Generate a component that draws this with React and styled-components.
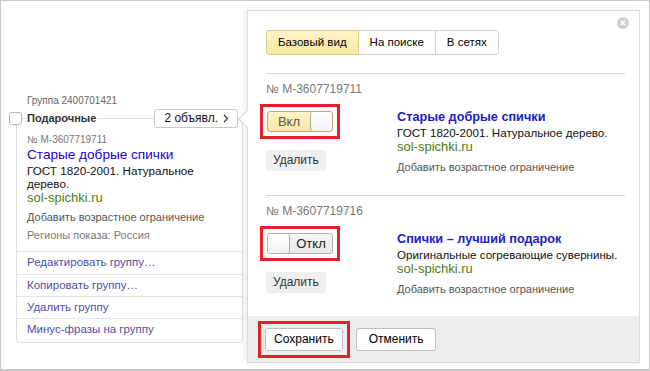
import React from "react";
import styled, { createGlobalStyle, css } from "styled-components";

const Global = createGlobalStyle`
  html, body { margin: 0; padding: 0; background: #fff; }
  body { font-family: "Liberation Sans", Arial, sans-serif; color: #000; }
  * { box-sizing: border-box; }
`;

const Frame = styled.div`
  width: 650px;
  height: 371px;
  border: 1px solid #c9c9c9;
  border-bottom-width: 2px;
  display: flex;
  align-items: flex-start;
  background: #fff;
  overflow: hidden;
`;

/* ---------- left group card ---------- */
const LeftCol = styled.div`
  width: 234px;
  margin-left: 8px;
  padding-top: 93px;
  display: flex;
  flex-direction: column;
`;

const GroupId = styled.div`
  font-size: 10px;
  line-height: 14px;
  color: #666;
  margin-left: 18px;
`;

const Card = styled.div`
  margin: 10px 0 0 7px;
  border: 1px solid #dedede;
  border-radius: 0 0 4px 4px;
  display: flex;
  flex-direction: column;
`;

const CardHeader = styled.div`
  display: flex;
  align-items: center;
  height: 18px;
  margin: -10px 4px 0 -8px;
`;

const Checkbox = styled.span`
  width: 13px;
  height: 13px;
  border: 1px solid #b5b5b5;
  border-radius: 3px;
  background: #fff;
  flex: none;
`;

const GroupName = styled.span`
  margin-left: 5px;
  padding-right: 2px;
  background: #fff;
  font-size: 11px;
  font-weight: bold;
  color: #333;
  line-height: 16px;
`;

const CountButton = styled.span`
  margin-left: auto;
  height: 19px;
  padding: 0 8px 0 9px;
  border: 1px solid #c8c8c8;
  border-radius: 3px;
  background: #fff;
  font-size: 12px;
  line-height: 17px;
  color: #111;
  display: flex;
  align-items: center;
  gap: 5px;
`;

const CardBody = styled.div`
  padding: 6px 16px 9px 10px;
  display: flex;
  flex-direction: column;
`;

const SmallGrey = styled.div`
  font-size: ${(p) => p.$fs || 11}px;
  line-height: 14px;
  color: ${(p) => p.$color || "#777"};
  margin-top: ${(p) => p.$mt || 0}px;
`;

const CardTitle = styled.div`
  font-size: 13.6px;
  line-height: 16px;
  color: #2200cc;
`;

const CardText = styled.div`
  font-size: 11.7px;
  line-height: 13px;
  color: #111;
  margin-top: 1px;
`;

const Domain = styled.div`
  font-size: 13px;
  line-height: ${(p) => p.$lh || 14}px;
  color: #4a7d16;
`;

const CardLinks = styled.div`
  border-top: 1px solid #e3e3e3;
  padding-bottom: 2px;
  display: flex;
  flex-direction: column;
`;

const CardLink = styled.div`
  height: 22px;
  padding-left: 10px;
  font-size: 11.5px;
  line-height: 21px;
  color: #4e4ea8;
  & + & { border-top: 1px solid #e3e3e3; }
`;

/* ---------- popup ---------- */
const Popup = styled.div`
  position: relative;
  margin: 9px 0 0 4px;
  width: 393px;
  height: 353px;
  border: 1px solid #dadada;
  background: #fff;
  box-shadow: -3px 0 6px rgba(0, 0, 0, 0.08);
  display: flex;
  flex-direction: column;

  &::before {
    content: "";
    position: absolute;
    left: -7px;
    top: 101px;
    width: 13px;
    height: 13px;
    background: #fff;
    border-left: 1px solid #d6d6d6;
    border-bottom: 1px solid #d6d6d6;
    transform: rotate(45deg);
  }
`;

const Close = styled.span`
  position: absolute;
  top: 6px;
  right: 10px;
  width: 12px;
  height: 12px;
  border-radius: 50%;
  background: #cfcfcf;
  display: flex;
  align-items: center;
  justify-content: center;
`;

const PopupBody = styled.div`
  flex: 1;
  min-height: 0;
  padding: 19px 14px 0 18px;
  display: flex;
  flex-direction: column;
`;

const Tabs = styled.div`
  display: flex;
  margin-bottom: 18px;
`;

const Tab = styled.div`
  height: 25px;
  padding: 0 11px;
  font-size: 11.5px;
  line-height: 23px;
  color: #000;
  border: 1px solid #cfcfcf;
  margin-left: -1px;
  &:first-child { margin-left: 0; border-radius: 3px 0 0 3px; }
  &:last-child { border-radius: 0 3px 3px 0; }
  ${(p) =>
    p.$active &&
    css`
      position: relative;
      background: linear-gradient(#fff3c8, #fde8a4);
      border-color: #dcc884;
    `}
`;

const Section = styled.div`
  border-top: 1px solid #d6d6d6;
  padding: 7px 0 21px;
  display: flex;
  flex-direction: column;
`;

const AdNumber = styled.div`
  font-size: 12px;
  line-height: 16px;
  color: #777;
`;

const AdRow = styled.div`
  display: flex;
  margin-top: 7px;
`;

const AdControls = styled.div`
  width: 131px;
  flex: none;
  display: flex;
  flex-direction: column;
  align-items: flex-start;
`;

const Highlight = styled.div`
  border: 3px solid #e41e2a;
  padding: 4px;
  margin-left: -6px;
  display: flex;
`;

const Toggle = styled.div`
  width: 66px;
  height: 21px;
  border: 1px solid ${(p) => (p.$on ? "#b9a978" : "#b2b2b2")};
  border-radius: 3px;
  display: flex;
  flex-direction: ${(p) => (p.$on ? "row" : "row-reverse")};
  overflow: hidden;
  background: ${(p) =>
    p.$on ? "linear-gradient(#fff3c8, #fce7a3)" : "linear-gradient(#f6f6f6, #e9e9e9)"};
`;

const ToggleLabel = styled.span`
  flex: 1;
  text-align: center;
  font-size: 13px;
  line-height: 19px;
  color: ${(p) => (p.$on ? "#555" : "#222")};
`;

const Knob = styled.span`
  width: 22px;
  flex: none;
  background: linear-gradient(#fff, #f2f2f2);
  border-${(p) => (p.$on ? "left" : "right")}: 1px solid #a9a9a9;
  border-radius: 3px;
`;

const GreyButton = styled.div`
  margin-top: 11px;
  height: 21px;
  padding: 0 7px;
  background: #efefef;
  border-radius: 2px;
  font-size: 12px;
  line-height: 21px;
  color: #333;
`;

const AdText = styled.div`
  flex: 1;
  min-width: 0;
  padding-top: 6px;
  display: flex;
  flex-direction: column;
`;

const AdTitle = styled.div`
  font-size: 12.7px;
  font-weight: bold;
  line-height: 15px;
  color: #2020c4;
`;

const AdDesc = styled.div`
  font-size: 11.6px;
  line-height: 15px;
  color: #111;
  white-space: nowrap;
`;

const AgeLink = styled.div`
  margin-top: 6px;
  font-size: 11px;
  line-height: 14px;
  color: #555;
`;

const Footer = styled.div`
  height: 46px;
  flex: none;
  background: #ededed;
  padding: 4px 10px;
  display: flex;
  align-items: center;
  gap: 6px;
`;

const WhiteButton = styled.div`
  height: 23px;
  padding: 0 ${(p) => p.$px || 8}px;
  border: 1px solid #bdbdbd;
  border-radius: 3px;
  background: #fff;
  font-size: 12px;
  line-height: 21px;
  color: #000;
`;

const FooterHighlight = styled(Highlight)`
  margin-left: 0;
`;

const ads = [
  {
    id: "№ M-3607719711",
    on: true,
    title: "Старые добрые спички",
    text: "ГОСТ 1820-2001. Натуральное дерево.",
  },
  {
    id: "№ M-3607719716",
    on: false,
    title: "Спички – лучший подарок",
    text: "Оригинальные согревающие сувернины.",
  },
];

export default function App() {
  return (
    <>
      <Global />
      <Frame>
        <LeftCol>
          <GroupId>Группа 2400701421</GroupId>
          <Card>
            <CardHeader>
              <Checkbox />
              <GroupName>Подарочные</GroupName>
              <CountButton>
                2 объявл.
                <svg width="6" height="9" viewBox="0 0 6 9">
                  <path d="M1 1l3.5 3.5L1 8" fill="none" stroke="#333" strokeWidth="1.2" />
                </svg>
              </CountButton>
            </CardHeader>
            <CardBody>
              <SmallGrey $fs={10}>№ M-3607719711</SmallGrey>
              <CardTitle>Старые добрые спички</CardTitle>
              <CardText>ГОСТ 1820-2001. Натуральное дерево.</CardText>
              <Domain $lh={15}>sol-spichki.ru</Domain>
              <SmallGrey $mt={5} $color="#555">
                Добавить возрастное ограничение
              </SmallGrey>
              <SmallGrey $mt={4} $color="#777">
                Регионы показа: Россия
              </SmallGrey>
            </CardBody>
            <CardLinks>
              <CardLink>Редактировать группу…</CardLink>
              <CardLink>Копировать группу…</CardLink>
              <CardLink>Удалить группу</CardLink>
              <CardLink>Минус-фразы на группу</CardLink>
            </CardLinks>
          </Card>
        </LeftCol>

        <Popup>
          <Close>
            <svg width="6" height="6" viewBox="0 0 6 6">
              <path d="M1 1l4 4M5 1L1 5" stroke="#fff" strokeWidth="1.5" />
            </svg>
          </Close>
          <PopupBody>
            <Tabs>
              <Tab $active>Базовый вид</Tab>
              <Tab>На поиске</Tab>
              <Tab>В сетях</Tab>
            </Tabs>
            {ads.map((ad) => (
              <Section key={ad.id}>
                <AdNumber>{ad.id}</AdNumber>
                <AdRow>
                  <AdControls>
                    <Highlight>
                      <Toggle $on={ad.on}>
                        <ToggleLabel $on={ad.on}>{ad.on ? "Вкл" : "Откл"}</ToggleLabel>
                        <Knob $on={ad.on} />
                      </Toggle>
                    </Highlight>
                    <GreyButton>Удалить</GreyButton>
                  </AdControls>
                  <AdText>
                    <AdTitle>{ad.title}</AdTitle>
                    <AdDesc>{ad.text}</AdDesc>
                    <Domain>sol-spichki.ru</Domain>
                    <AgeLink>Добавить возрастное ограничение</AgeLink>
                  </AdText>
                </AdRow>
              </Section>
            ))}
          </PopupBody>
          <Footer>
            <FooterHighlight>
              <WhiteButton $px={8}>Сохранить</WhiteButton>
            </FooterHighlight>
            <WhiteButton $px={12}>Отменить</WhiteButton>
          </Footer>
        </Popup>
      </Frame>
    </>
  );
}
